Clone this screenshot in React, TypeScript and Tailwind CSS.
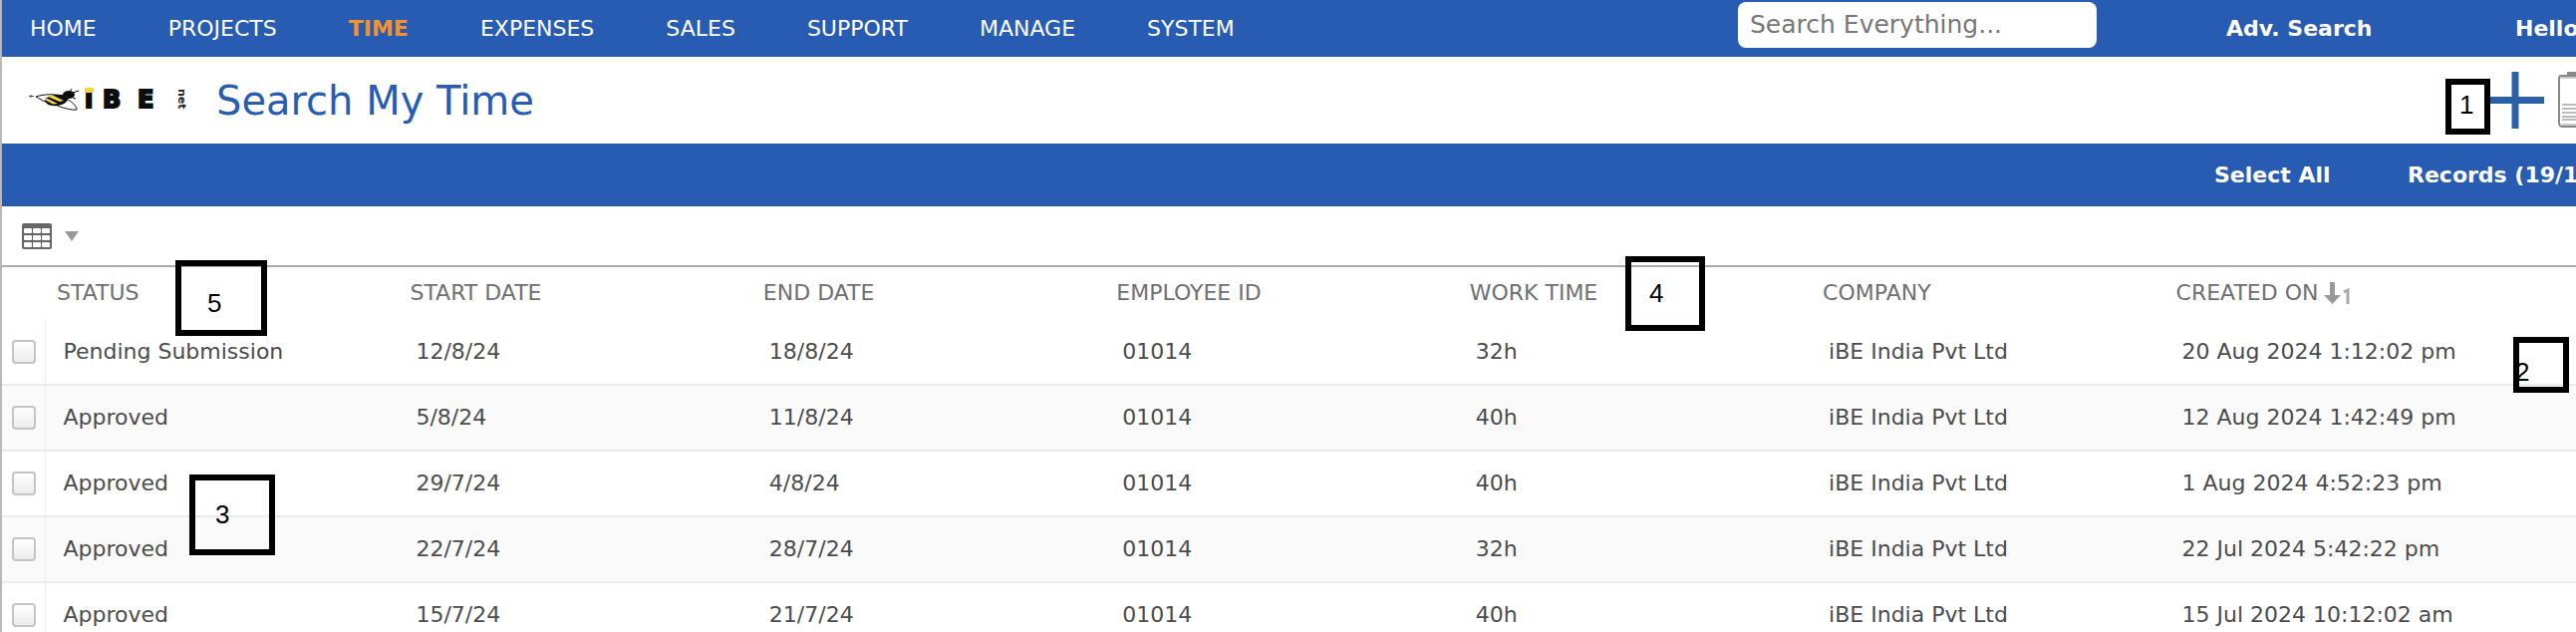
import React from "react";

const FONT = "font-['DejaVu_Sans',Verdana,sans-serif]";

const navItems = ["HOME", "PROJECTS", "TIME", "EXPENSES", "SALES", "SUPPORT", "MANAGE", "SYSTEM"];

const columns = ["STATUS", "START DATE", "END DATE", "EMPLOYEE ID", "WORK TIME", "COMPANY", "CREATED ON"];

const rows = [
  ["Pending Submission", "12/8/24", "18/8/24", "01014", "32h", "iBE India Pvt Ltd", "20 Aug 2024 1:12:02 pm"],
  ["Approved", "5/8/24", "11/8/24", "01014", "40h", "iBE India Pvt Ltd", "12 Aug 2024 1:42:49 pm"],
  ["Approved", "29/7/24", "4/8/24", "01014", "40h", "iBE India Pvt Ltd", "1 Aug 2024 4:52:23 pm"],
  ["Approved", "22/7/24", "28/7/24", "01014", "32h", "iBE India Pvt Ltd", "22 Jul 2024 5:42:22 pm"],
  ["Approved", "15/7/24", "21/7/24", "01014", "40h", "iBE India Pvt Ltd", "15 Jul 2024 10:12:02 am"],
];

function Logo() {
  return (
    <svg width="164" height="28" viewBox="0 -2 164 28" role="img" aria-label="iBE.net" className="shrink-0">
      <path d="M7 8C16 5 26 5 40 8C30 10 22 13 17 13C13 12 11 10 7 8Z" fill="#fff" stroke="#111" strokeWidth="1" />
      <path d="M0 7.500H5M2 6V9" stroke="#555" strokeWidth="1" />
      <path d="M38 11C42 11 49 19 48 21C44 22 32 19 24 15" fill="#fff" stroke="#111" strokeWidth="1" />
      <path d="M16 12C18 6 29 5 37 7C42 9 38 15 31 16.500C24 18 18 17 16 12Z" fill="#0b0d0e" />
      <path d="M19 8L31 13L35 12L24 6.500ZM16 11L24 15.500L29 15L18 9.500Z" fill="#f2d444" />
      <ellipse cx="40" cy="6" rx="6" ry="4" fill="#0b0d0e" />
      <path d="M41 3L43 0M44 4L50 2M44 9L47 10" stroke="#111" strokeWidth="1" />
      <g fill="#0b0d0e" stroke="#0b0d0e" strokeWidth="2" fontFamily="DejaVu Sans" fontWeight="700" fontSize="24">
        <text x="56" y="19">i</text>
        <text x="74" y="19">B</text>
        <text x="109" y="19">E</text>
      </g>
      <rect x="56" y="-1" width="9" height="5" fill="#f2d444" />
      <text
        transform="translate(150 0) rotate(90)"
        fontFamily="DejaVu Sans"
        fontWeight="700"
        fontSize="11"
        fill="#222"
      >
        net
      </text>
    </svg>
  );
}

function GridIcon() {
  return (
    <svg width="30" height="26" viewBox="0 0 30 26" aria-hidden="true">
      <rect width="30" height="26" rx="2" fill="#666" />
      <g fill="#fff">
        {[5, 12, 19].map((y) =>
          [2, 11, 20].map((x) => <rect key={`${x}-${y}`} x={x} y={y} width="8" height="5" rx="1" />)
        )}
      </g>
    </svg>
  );
}

function Marker({ place, text, children }: { place: string; text: string; children: string }) {
  return (
    <div
      className={`absolute border-[6px] border-black font-['Liberation_Sans',Arial,sans-serif] text-[26px] leading-6 text-black ${place}`}
    >
      <span className={`absolute ${text}`}>{children}</span>
    </div>
  );
}

export default function App() {
  return (
    <div className={`relative overflow-hidden border-l-2 border-[#b9b9b9] bg-white text-[22px] leading-7 ${FONT}`}>
      <header className="flex h-[57px] items-center bg-[#275cb2] text-white">
        <nav className="flex gap-[72px] pl-7" aria-label="Main">
          {navItems.map((item) => (
            <a key={item} href="#" className={item === "TIME" ? "font-bold text-[#f2932f]" : ""}>
              {item}
            </a>
          ))}
        </nav>
        <div className="ml-auto flex shrink-0 items-center">
          <input
            type="search"
            aria-label="Search Everything"
            placeholder="Search Everything..."
            className="mb-2 mr-[130px] h-[46px] w-[360px] rounded-lg bg-white px-3 text-[25px] text-black placeholder:text-[#777]"
          />
          <a href="#" className="w-[290px] font-bold">Adv. Search</a>
          <a href="#" className="w-[61px] whitespace-nowrap font-bold">Hello</a>
        </div>
      </header>

      <section className="flex h-[87px] items-center pl-[27px]">
        <Logo />
        <h1 className="pl-6 text-[40px] leading-[48px] text-[#275cb2]">Search My Time</h1>
        <div className="ml-auto flex shrink-0 items-center">
          <button type="button" aria-label="Add">
            <svg width="54" height="57" viewBox="0 0 54 57" className="block">
              <path d="M0 28.500H54M25 0V57" stroke="#2a60a9" strokeWidth="7" />
            </svg>
          </button>
          <button type="button" aria-label="Clipboard" className="ml-3.5">
            <svg width="18" height="57" viewBox="0 0 18 57" className="block">
              <path d="M18 4H3Q1 4 1 7V51Q1 55 5 55H18" fill="#fff" stroke="#888" strokeWidth="2" />
              <path d="M2 6H18M4 53H18" stroke="#ccc" strokeWidth="2" />
              <rect x="9" y="0" width="9" height="4" fill="#888" />
              <path d="M4 33H18M4 37H18M4 41H18M4 45H18M4 48H18" stroke="#bbb" strokeWidth="2" />
            </svg>
          </button>
        </div>
      </section>

      <div className="flex h-[63px] items-center justify-end bg-[#275cb2] font-bold text-white">
        <button type="button" className="w-[194px] text-left">Select All</button>
        <button type="button" className="w-[169px] whitespace-nowrap text-left">Records (19/19)</button>
      </div>

      <div className="flex h-[61px] items-center border-b-2 border-[#aaa] pl-5">
        <button type="button" aria-label="Choose columns" className="flex items-center gap-[13px]">
          <GridIcon />
          <svg width="14" height="10" viewBox="0 0 14 10" aria-hidden="true">
            <path d="M0 0H14L7 10Z" fill="#999" />
          </svg>
        </button>
      </div>

      <table className="w-full table-fixed border-collapse text-left">
        <colgroup>
          <col className="w-[43px]" />
          {columns.map((c) => (
            <col key={c} />
          ))}
          <col className="w-[59px]" />
        </colgroup>
        <thead>
          <tr className="h-[52px] text-[#707070]">
            <td />
            {columns.map((c) => (
              <th key={c} className="whitespace-nowrap pl-3 font-normal" scope="col">
                <span className="inline-flex items-center gap-1.5">
                  {c}
                  {c === "CREATED ON" && (
                    <svg width="28" height="22" viewBox="0 0 28 22" aria-label="Sorted descending">
                      <path d="M6 0H11V13H17L8.500 22L0 13H6Z" fill="#999" />
                      <path d="M20 10L24 8V22" fill="none" stroke="#aaa" strokeWidth="3" />
                    </svg>
                  )}
                </span>
              </th>
            ))}
            <td />
          </tr>
        </thead>
        <tbody>
          {rows.map((row, i) => (
            <tr key={row[6]} className="h-[66px] border-b-2 border-[#ebebeb] text-[#4c4c4c] even:bg-[#fafafa]">
              <td className="border-r border-[#ebebeb] pl-2.5">
                <input
                  type="checkbox"
                  aria-label={`Select row ${i + 1}`}
                  className="block h-6 w-6 appearance-none rounded-sm border-2 border-[#c4c4c4] bg-linear-to-b from-white to-[#ececec]"
                />
              </td>
              {row.map((cell, j) => (
                <td key={j} className="whitespace-nowrap pl-[18px]">
                  {cell}
                </td>
              ))}
              <td />
            </tr>
          ))}
        </tbody>
      </table>

      <Marker place="right-[86px] top-[79px] h-14 w-[45px]" text="left-2 top-2">1</Marker>
      <Marker place="right-[7px] top-[338px] h-14 w-14" text="-left-1 top-[17px]">2</Marker>
      <Marker place="left-[188px] top-[476px] h-[81px] w-[86px]" text="left-5 top-[22px]">3</Marker>
      <Marker place="right-[874px] top-[257px] h-[75px] w-20" text="left-[18px] top-[19px]">4</Marker>
      <Marker place="left-[174px] top-[261px] h-[76px] w-[92px]" text="left-[26px] top-[25px]">5</Marker>
    </div>
  );
}
